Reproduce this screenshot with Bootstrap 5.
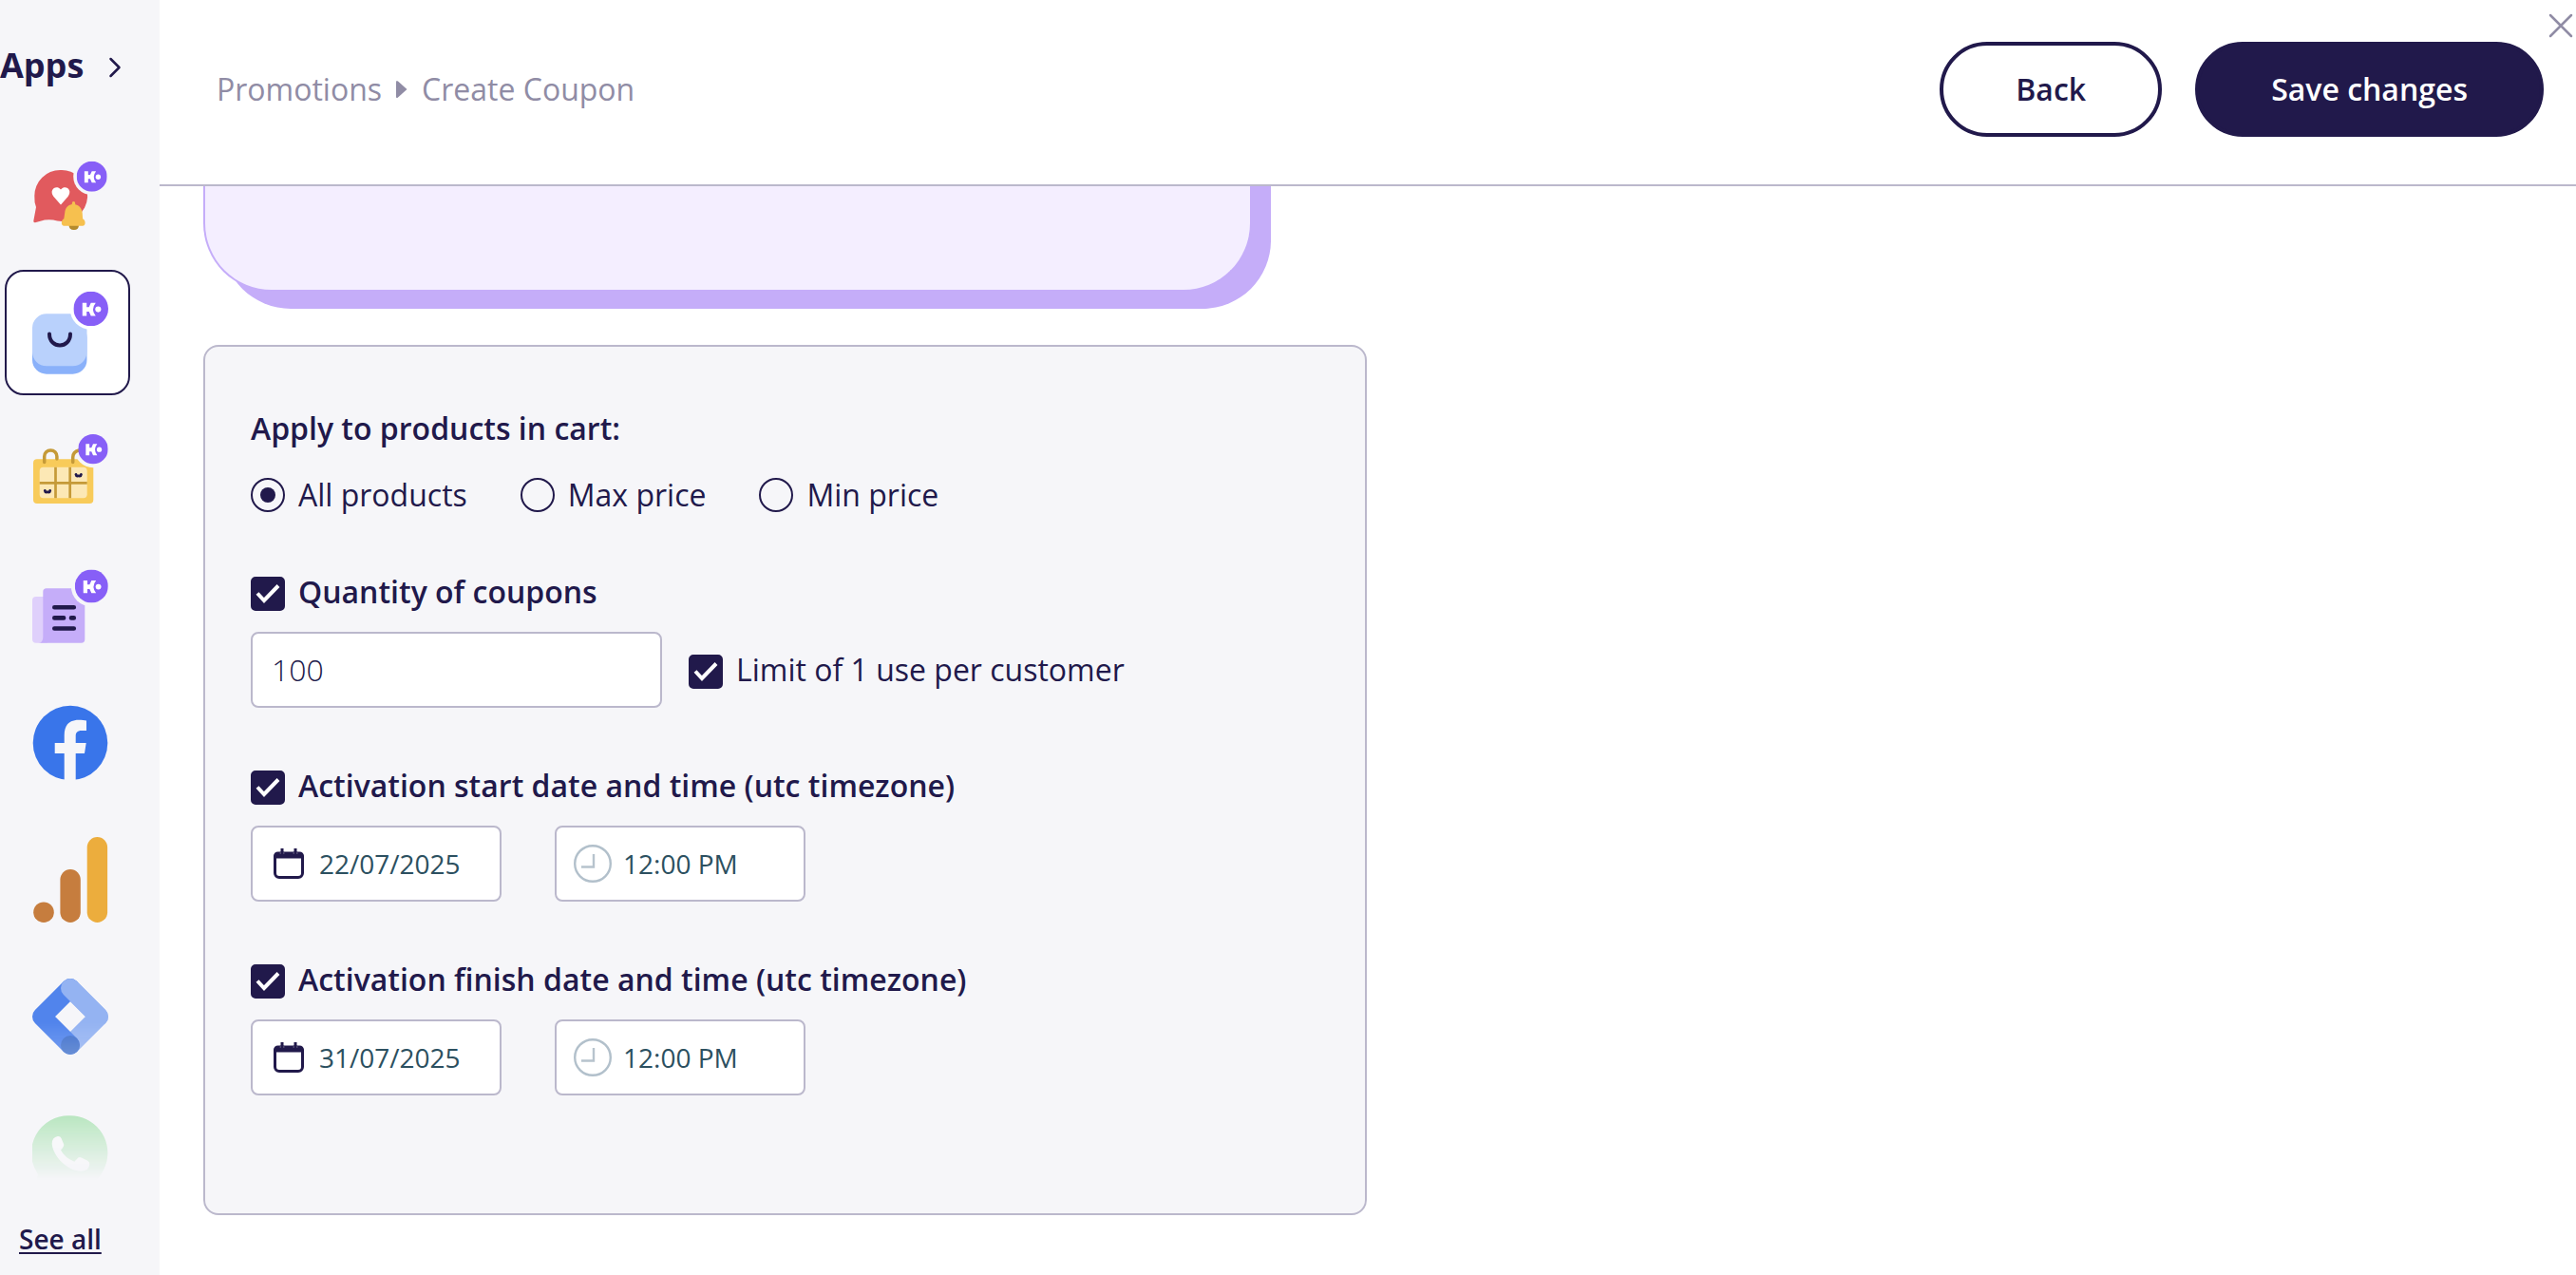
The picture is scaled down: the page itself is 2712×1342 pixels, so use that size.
<!DOCTYPE html>
<html lang="en">
<head>
<meta charset="utf-8">
<meta name="viewport" content="width=device-width, initial-scale=1">
<title>Create Coupon</title>
<link href="https://cdn.jsdelivr.net/npm/bootstrap@5.3.0/dist/css/bootstrap.min.css" rel="stylesheet">
<style>
:root { --ink: #21194b; --line: #bbb8cc; --panel: #f6f6f9; --muted-ink: #908ca5; --lilac: #c5adf9; }
body { font-family: "Open Sans", "Noto Sans", sans-serif; font-size: 32px; line-height: 36px; color: var(--ink); background: #fff; }

/* Sidebar */
.apps-bar { width: 168px; background: var(--panel); }
.apps-title { height: 140px; padding-top: 49px; gap: 26px; font-size: 36px; line-height: 40px; font-weight: 700; color: var(--ink); }
.apps-title svg { margin-top: 11px; }
.apps-list { gap: 12px; padding-left: 5px; min-height: 0;
  -webkit-mask-image: linear-gradient(to bottom, #000 calc(100% - 166px), transparent 100%);
  mask-image: linear-gradient(to bottom, #000 calc(100% - 166px), transparent 100%); }
.app-tile { width: 132px; height: 132px; padding: 14px 0 0 27px; border: 2px solid transparent; border-radius: 20px; color: var(--panel); }
.app-tile.active { border-color: var(--ink); background: #fff; color: #fff; }
.app-tile svg { display: block; width: 80px; height: 100px; }
.see-all { height: 100px; padding: 44px 0 0 20px; font-size: 28px; line-height: 36px; font-weight: 600; }
.see-all a { color: var(--ink); text-underline-offset: 3px; text-decoration-thickness: 2px; }

/* Header */
.top-bar { height: 196px; padding: 0 34px 6px 60px; border-bottom: 2px solid var(--line); }
.crumbs { gap: 15px; color: var(--muted-ink); }
.crumbs a { color: inherit; text-decoration: none; }
.top-actions { gap: 35px; }
.btn-pill { height: 100px; padding: 0 76px; border: 4px solid var(--ink); border-radius: 50px; font-size: 32px; line-height: 36px; font-weight: 600; color: var(--ink); }
.btn-pill-solid { background: var(--ink); color: #fff; }
.close-x { top: 14px; right: 3px; width: 26px; height: 26px; }
.close-x svg { display: block; }

/* Content */
.work-area { padding: 0 46px; min-height: 0; }
.preview-box { max-width: 1104px; height: 171px; margin-top: -60px; margin-bottom: 56px; background: #f4eeff; border: 2px solid var(--lilac); border-top: 0; border-radius: 0 0 72px 72px; box-shadow: 20px 18px 0 var(--lilac); }
.coupon-card { max-width: 1225px; padding: 68px 48px 124px; background: var(--panel); border: 2px solid var(--line); border-radius: 16px; }
.coupon-card h2 { font-size: 32px; line-height: 36px; font-weight: 600; margin: 0 0 34px; }
.radio-row { gap: 56px; margin-bottom: 68px; }
.pick { gap: 14px; }
.pick .form-check-input { width: 36px; height: 36px; margin: 0; float: none; border: 2px solid var(--ink); background-color: transparent; background-size: 36px 36px; background-position: center; background-origin: border-box; }
.pick .form-check-input[type=radio]:checked { background-image: url("data:image/svg+xml,%3csvg xmlns='http://www.w3.org/2000/svg' viewBox='0 0 36 36'%3e%3ccircle cx='18' cy='18' r='8' fill='%2321194b'/%3e%3c/svg%3e"); }
.pick .form-check-input[type=checkbox] { border-radius: 5px; }
.pick .form-check-input[type=checkbox]:checked { background-color: var(--ink); background-image: url("data:image/svg+xml,%3csvg xmlns='http://www.w3.org/2000/svg' viewBox='0 0 36 36'%3e%3cpath d='M7 17.500l7 7.500L29 9.500' fill='none' stroke='%23fff' stroke-width='4'/%3e%3c/svg%3e"); }
.tick label { line-height: 32px; }
.field-block { margin-bottom: 66px; }
.field-block:last-child { margin-bottom: 0; }
.field-block > .tick { margin-bottom: 22px; }
.strong-label { font-weight: 600; }
.qty-row { gap: 28px; }
.qty-row .tick { padding-top: 4px; }
.qty-box { width: 433px; height: 80px; padding: 0 20px 2px; border: 2px solid var(--line); border-radius: 8px; background: #fff; font-size: 32px; font-weight: 300; color: var(--ink); }
.when-row { gap: 56px; }
.when-box { width: 264px; height: 80px; border: 2px solid var(--line); border-radius: 8px; background: #fff; }
.when-box.day { padding-left: 22px; gap: 16px; }
.when-box.hour { padding-left: 18px; gap: 12px; }
.when-box input { min-width: 0; width: 100%; padding: 0; border: 0; background: transparent; font-size: 28px; color: #2c5060; }
</style>
</head>
<body>
<svg width="0" height="0" class="position-absolute" aria-hidden="true">
  <symbol id="kplus" viewBox="0 0 36 36">
    <circle cx="18" cy="18" r="18" fill="#875ff7"/>
    <path d="M9.200 11.800h4.400v4.400h2.400l2-4.400h5Q17.500 18.600 23 25.400h-5l-2-4.400h-2.400v4.400H9.200z" fill="#fff"/>
    <circle cx="25.500" cy="18.600" r="3" fill="#fff"/>
  </symbol>
  <symbol id="cal" viewBox="0 0 32 32">
    <path d="M1.500 9h29v17a4.500 4.500 0 0 1-4.500 4.500H6A4.500 4.500 0 0 1 1.500 26z" fill="none" stroke="#21194b" stroke-width="3"/>
    <path d="M0 10V8a4.500 4.500 0 0 1 4.500-4.500h23A4.500 4.500 0 0 1 32 8v2z" fill="#21194b"/>
    <path d="M9 3v3M23 3v3" stroke="#77728f" stroke-width="4.500"/>
    <path d="M9 0v6M23 0v6" stroke="#21194b" stroke-width="3"/>
  </symbol>
  <symbol id="clk" viewBox="0 0 40 40">
    <circle cx="20" cy="20" r="18.800" fill="none" stroke="#b2c0cb" stroke-width="2.400"/>
    <path d="M21 10v13.500H8" fill="none" stroke="#b7c3cd" stroke-width="2.400"/>
  </symbol>
</svg>

<div class="d-flex vh-100 overflow-hidden">
  <aside class="apps-bar d-flex flex-column flex-shrink-0">
    <a href="#" class="apps-title d-flex text-decoration-none flex-shrink-0">Apps
      <svg width="14" height="22" viewBox="0 0 14 22" aria-hidden="true"><path d="M2.500 2l9 9-9 9" fill="none" stroke="#21194b" stroke-width="2.500" stroke-linecap="round" stroke-linejoin="round"/></svg>
    </a>
    <nav class="apps-list d-flex flex-column flex-fill overflow-hidden" aria-label="Apps">
      <a href="#" class="app-tile flex-shrink-0" aria-label="Notifications">
        <svg viewBox="0 0 80 100"><path d="M29.300 23a27 27 0 1 1-3 53.500Q20 74.500 13 75.500L3 78.300Q1 78.500 1.300 76.500L4 62Q2 57 2.300 50A27 27 0 0 1 29.300 23z" fill="#e15a5e"/><path d="M30 59.500l-7.500-8.500C17 44 25 38 30 43.500 35 38 43 44 37.500 51z" fill="#fff"/><path d="M38.500 80.500h10.500q0 5.500-5.200 5.500t-5.300-5.500z" fill="#b48a2d"/><path d="M41.800 59v-1q0-2 1.700-2t1.700 2v1.200c5 1 7.300 5 7.500 9l.4 6c3.300 1.500 3.500 7.500-.1 7.500H33.500c-3.500 0-3.500-6-.2-7.500l.9-6c.4-5 3-8.300 7.600-9.200z" fill="#f6c04f"/><circle cx="62.700" cy="29.700" r="19.500" fill="currentColor"/><use href="#kplus" x="46.700" y="13.700" width="32" height="32"/></svg>
      </a>
      <a href="#" class="app-tile active flex-shrink-0" aria-label="Store">
        <svg viewBox="0 0 80 100"><rect y="40" width="57.500" height="53.700" rx="15" fill="#8ab1fa"/><rect y="30.300" width="57.500" height="55" rx="15" fill="#b9d1fc"/><path d="M18 51.500c0 16 22 16 22 0" fill="none" stroke="#21194b" stroke-width="4" stroke-linecap="round"/><circle cx="61.700" cy="25" r="22" fill="currentColor"/><use href="#kplus" x="43.400" y="6.700" width="36.600" height="36.600"/></svg>
      </a>
      <a href="#" class="app-tile flex-shrink-0" aria-label="Bookings">
        <svg viewBox="0 0 80 100"><rect x="1" y="39.300" width="63.300" height="46.700" rx="4" fill="#f8cb5a"/><rect x="7.700" y="47.700" width="50" height="32.600" rx="4" fill="#fce8b5"/><path d="M24.500 47.700v32.600M39.700 47.700v32.600M7.700 64.300h50" stroke="#c59a38" stroke-width="2.700"/><path d="M12.700 42.500v-6a6.600 6.600 0 0 1 13.200 0v2.500" fill="none" stroke="#c59a38" stroke-width="3.500" stroke-linecap="round"/><path d="M46 55.500c.3 2 2.700 2 2.700 0 0 2 2.400 2 2.700 0M13.300 72.500c.3 2 2.700 2 2.700 0 0 2 2.400 2 2.700 0" fill="none" stroke="#21194b" stroke-width="2.800" stroke-linecap="round"/><circle cx="64" cy="28.700" r="19.500" fill="currentColor"/><path d="M42.700 42.500v-5q0-6 6.500-7.500" fill="none" stroke="#c59a38" stroke-width="3.500" stroke-linecap="round"/><use href="#kplus" x="48.300" y="13" width="31.400" height="31.400"/></svg>
      </a>
      <a href="#" class="app-tile flex-shrink-0" aria-label="Forms">
        <svg viewBox="0 0 80 100"><rect y="40" width="18" height="48.700" rx="4" fill="#dfd0fb"/><path d="M11.300 35q0-3.700 3.700-3.700h36.600q3.700 0 3.700 3.700v50q0 3.700-3.700 3.700H6q5.300 0 5.300-6z" fill="#c5adf9"/><path d="M23.300 51.300h20.500M23.300 62.400h9.800M41 62.400h2.800M23.300 73.500h20.500" stroke="#21194b" stroke-width="4.600" stroke-linecap="round"/><circle cx="62.300" cy="29" r="21.500" fill="currentColor"/><use href="#kplus" x="44.800" y="11.500" width="35" height="35"/></svg>
      </a>
      <a href="#" class="app-tile flex-shrink-0" aria-label="Facebook">
        <svg viewBox="0 0 80 100"><circle cx="40" cy="50" r="39.300" fill="#3975ea"/><path d="M33.700 90V61h-10V50h10v-8c0-11 5.300-16.300 15.300-16.300 3 0 6 .3 8 .8V37h-5c-5 0-6.300 2.500-6.300 6v7h11L55 61h-9.300v29z" fill="currentColor"/></svg>
      </a>
      <a href="#" class="app-tile flex-shrink-0" aria-label="Analytics">
        <svg viewBox="0 0 80 100"><rect x="57.700" y="5" width="21.400" height="90" rx="10.700" fill="#ecad3d"/><rect x="29.400" y="39" width="21.400" height="56" rx="10.700" fill="#c67d3e"/><circle cx="12" cy="84.200" r="10.800" fill="#c67d3e"/></svg>
      </a>
      <a href="#" class="app-tile flex-shrink-0" aria-label="Tag Manager">
        <svg viewBox="0 0 80 100" fill="none" stroke-width="20" stroke-linecap="round" stroke-linejoin="round"><path d="M40 20l30 30-30 30" stroke="#94b3f2"/><path d="M40 20L10 50l30 30" stroke="#5184ec"/><path d="M40 20l30 30" stroke="#94b3f2"/><circle cx="40" cy="80" r="10" fill="#4272cc"/></svg>
      </a>
      <a href="#" class="app-tile flex-shrink-0" aria-label="WhatsApp">
        <svg viewBox="0 0 80 100"><path d="M40 10.300a39.300 39.300 0 1 1-18 74.200L2 90l4-18A39.300 39.300 0 0 1 40 10.300z" fill="#62d06f"/><path d="M26.700 32q2.800-.3 3.800 2l2.700 6.500q.5 2-3.200 6 4 8 14.300 12.200l4-4.200q1.500-1 3.500 0l6.500 3.300q2 1 2 3.500-.5 7-8.500 7.400C38 69 22 54 20.700 40q0-7 6-8z" fill="#fff"/></svg>
      </a>
    </nav>
    <div class="see-all flex-shrink-0"><a href="#">See all</a></div>
  </aside>

  <main class="d-flex flex-column flex-fill position-relative">
    <header class="top-bar d-flex align-items-center justify-content-between flex-shrink-0">
      <nav class="crumbs d-flex align-items-center" aria-label="Breadcrumb">
        <a href="#">Promotions</a>
        <svg width="12" height="20" viewBox="0 0 12 20" aria-hidden="true"><path d="M0 2.500Q0 0 2 1.500L11.500 10 2 18.500Q0 20 0 17.500z" fill="#908ca5"/></svg>
        <span aria-current="page">Create Coupon</span>
      </nav>
      <div class="top-actions d-flex">
        <button type="button" class="btn btn-pill">Back</button>
        <button type="submit" form="coupon" class="btn btn-pill btn-pill-solid">Save changes</button>
      </div>
    </header>
    <button type="button" class="close-x position-absolute border-0 bg-transparent p-0" aria-label="Close">
      <svg width="26" height="26" viewBox="0 0 26 26"><path d="M2 2l22 22M24 2L2 24" stroke="#908ca5" stroke-width="2.500" stroke-linecap="round"/></svg>
    </button>

    <div class="work-area flex-fill overflow-hidden">
      <div class="preview-box"></div>
      <form id="coupon" class="coupon-card">
        <h2 id="scope">Apply to products in cart:</h2>
        <div class="radio-row d-flex" role="radiogroup" aria-labelledby="scope">
          <div class="pick d-flex"><input class="form-check-input" type="radio" name="scope" id="s-all" checked><label for="s-all">All products</label></div>
          <div class="pick d-flex"><input class="form-check-input" type="radio" name="scope" id="s-max"><label for="s-max">Max price</label></div>
          <div class="pick d-flex"><input class="form-check-input" type="radio" name="scope" id="s-min"><label for="s-min">Min price</label></div>
        </div>

        <div class="field-block">
          <div class="pick tick d-flex"><input class="form-check-input" type="checkbox" id="c-qty" checked><label class="strong-label" for="c-qty">Quantity of coupons</label></div>
          <div class="qty-row d-flex align-items-center">
            <input class="qty-box" type="text" inputmode="numeric" value="100" aria-label="Quantity">
            <div class="pick tick d-flex"><input class="form-check-input" type="checkbox" id="c-lim" checked><label for="c-lim">Limit of 1 use per customer</label></div>
          </div>
        </div>

        <div class="field-block">
          <div class="pick tick d-flex"><input class="form-check-input" type="checkbox" id="c-start" checked><label class="strong-label" for="c-start">Activation start date and time (utc timezone)</label></div>
          <div class="when-row d-flex">
            <label class="when-box day d-flex align-items-center"><svg class="flex-shrink-0" width="32" height="32"><use href="#cal"/></svg><input type="text" value="22/07/2025" aria-label="Start date"></label>
            <label class="when-box hour d-flex align-items-center"><svg class="flex-shrink-0" width="40" height="40"><use href="#clk"/></svg><input type="text" value="12:00 PM" aria-label="Start time"></label>
          </div>
        </div>

        <div class="field-block">
          <div class="pick tick d-flex"><input class="form-check-input" type="checkbox" id="c-end" checked><label class="strong-label" for="c-end">Activation finish date and time (utc timezone)</label></div>
          <div class="when-row d-flex">
            <label class="when-box day d-flex align-items-center"><svg class="flex-shrink-0" width="32" height="32"><use href="#cal"/></svg><input type="text" value="31/07/2025" aria-label="Finish date"></label>
            <label class="when-box hour d-flex align-items-center"><svg class="flex-shrink-0" width="40" height="40"><use href="#clk"/></svg><input type="text" value="12:00 PM" aria-label="Finish time"></label>
          </div>
        </div>
      </form>
    </div>
  </main>
</div>
<script src="https://cdn.jsdelivr.net/npm/bootstrap@5.3.0/dist/js/bootstrap.bundle.min.js"></script>
</body>
</html>
